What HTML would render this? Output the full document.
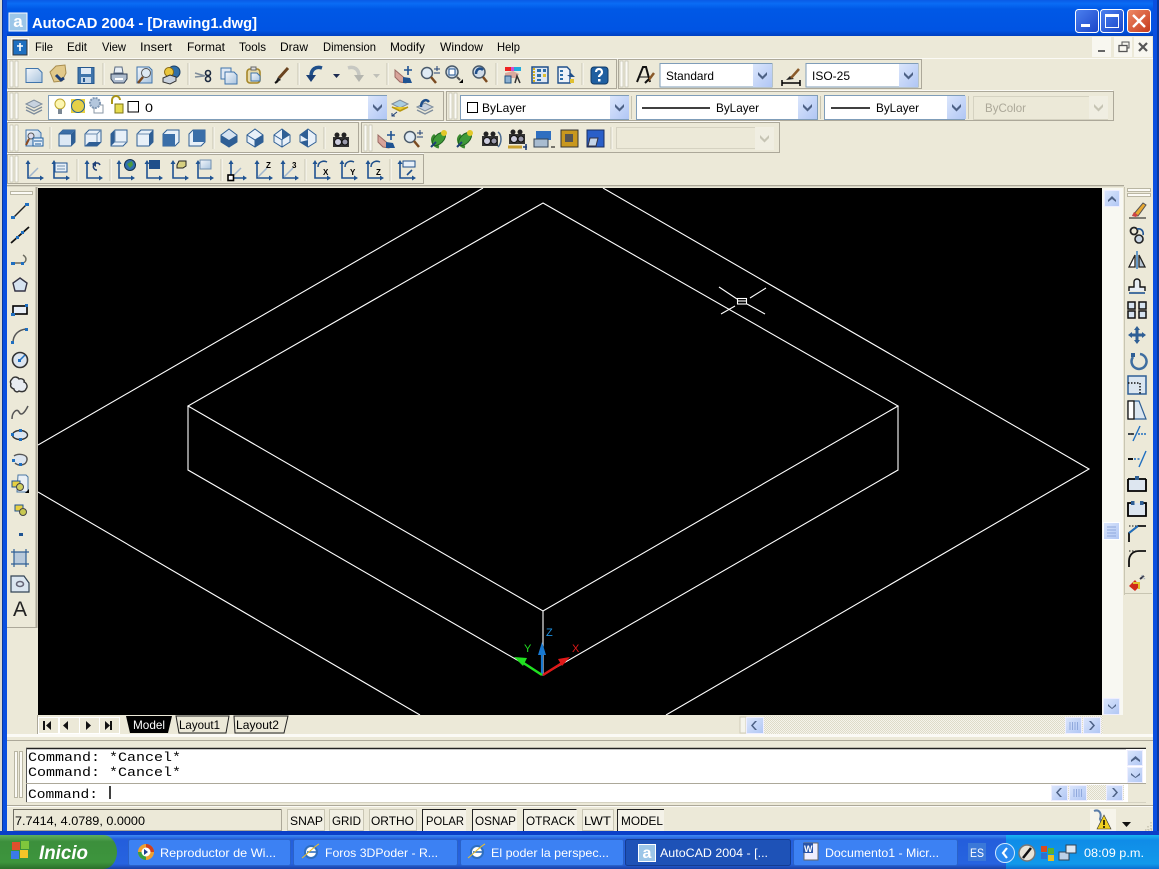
<!DOCTYPE html>
<html><head><meta charset="utf-8"><title>AutoCAD 2004</title>
<style>html,body{margin:0;padding:0;background:#ece9d8;overflow:hidden}svg{display:block}text{font-family:"Liberation Sans",sans-serif;font-size:12px;fill:#000}.m{font-family:"Liberation Mono",monospace;font-size:13px}.w{fill:#fff}</style></head><body>
<svg xmlns="http://www.w3.org/2000/svg" width="1159" height="869" viewBox="0 0 1159 869">
<defs>
<linearGradient id="tb" x1="0" y1="0" x2="0" y2="1"><stop offset="0" stop-color="#0a5ae6"/><stop offset=".1" stop-color="#0a6cf5"/><stop offset=".25" stop-color="#0058e6"/><stop offset=".85" stop-color="#0054e3"/><stop offset="1" stop-color="#0040c0"/></linearGradient>
<linearGradient id="task" x1="0" y1="0" x2="0" y2="1"><stop offset="0" stop-color="#3f8cf3"/><stop offset=".12" stop-color="#245edb"/><stop offset=".85" stop-color="#2663e0"/><stop offset="1" stop-color="#1941a5"/></linearGradient>
<linearGradient id="tray" x1="0" y1="0" x2="0" y2="1"><stop offset="0" stop-color="#18b5f2"/><stop offset=".15" stop-color="#0f8ce8"/><stop offset=".85" stop-color="#1199ea"/><stop offset="1" stop-color="#0b6fd0"/></linearGradient>
<linearGradient id="st" x1="0" y1="0" x2="0" y2="1"><stop offset="0" stop-color="#5fae5f"/><stop offset=".2" stop-color="#3c8f3c"/><stop offset=".8" stop-color="#3d953d"/><stop offset="1" stop-color="#2a6f2a"/></linearGradient>
<linearGradient id="cb" x1="0" y1="0" x2="1" y2="1"><stop offset="0" stop-color="#dbe6fc"/><stop offset="1" stop-color="#b0c6f4"/></linearGradient>
<linearGradient id="pg" x1="0" y1="0" x2="1" y2="1"><stop offset="0" stop-color="#f4f7fb"/><stop offset="1" stop-color="#a9c4de"/></linearGradient>
<linearGradient id="xbtn" x1="0" y1="0" x2="1" y2="1"><stop offset="0" stop-color="#4c80ef"/><stop offset="1" stop-color="#1a45c8"/></linearGradient>
<linearGradient id="xcl" x1="0" y1="0" x2="1" y2="1"><stop offset="0" stop-color="#ee8a66"/><stop offset="1" stop-color="#c5391c"/></linearGradient>
<pattern id="dith" width="2" height="2" patternUnits="userSpaceOnUse"><rect width="2" height="2" fill="#f5f4ec"/><rect width="1" height="1" fill="#dedbc8"/><rect x="1" y="1" width="1" height="1" fill="#dedbc8"/></pattern>

<g id="page"><path d="M-8-6.5H4l4 4V7.5H-8z" fill="url(#pg)" stroke="#3f74ab"/></g>
<g id="open"><path d="M-9-2l6-6 9-1 1 8-4 8-8 1z" fill="#e2c98a" stroke="#a88c4e"/><path d="M-3 1l5 5 3-2" stroke="#1f3f75" stroke-width="3" fill="none"/></g>
<g id="save"><rect x="-8" y="-7.5" width="16" height="16" fill="#3f74ab" stroke="#26578e"/><rect x="-5" y="-7" width="10" height="6" fill="#dfe9f4"/><rect x="-5" y="2" width="10" height="6" fill="#c3d6ea"/><rect x="-3" y="3" width="2" height="4" fill="#26578e"/></g>
<g id="print"><path d="M-4-8h7l1 6h-9z" fill="#e8eef5" stroke="#5a6a80"/><path d="M-8-1h16v5l-3 4h-10l-3-4z" fill="#aebccd" stroke="#2d3d55"/><rect x="-4" y="3" width="8" height="2" fill="#fff"/></g>
<g id="prev"><path d="M-8-8H4l3 3V8H-8z" fill="url(#pg)" stroke="#3f74ab"/><circle cx="1" cy="-2" r="4.5" fill="#dde9f3" stroke="#555"/><path d="M-2 2l-5 6" stroke="#7a4a20" stroke-width="2.5"/></g>
<g id="publish"><circle cx="3" cy="-3" r="6" fill="#2f6ea8" stroke="#1b3f66"/><circle cx="-2" cy="-3" r="4.5" fill="#e9c63c" stroke="#8a6a10"/><path d="M-8 3l7-3 6 2v4l-6 3-7-2z" fill="#c9d2de" stroke="#333"/></g>
<g id="cut"><path d="M-9-3l10 3M-9 1l9-1" stroke="#7f8c99" stroke-width="1.6"/><circle cx="4" cy="-3" r="2.5" fill="none" stroke="#1c2a40" stroke-width="1.6"/><circle cx="4" cy="3" r="2.5" fill="none" stroke="#1c2a40" stroke-width="1.6"/></g>
<g id="copy"><path d="M-8-8H2V3H-8z" fill="#dfe8f3" stroke="#3f74ab"/><path d="M-4-4H5l3 3V8H-4z" fill="url(#pg)" stroke="#3f74ab"/></g>
<g id="paste"><rect x="-7" y="-6" width="13" height="14" rx="3" fill="#e6d9a8" stroke="#a58628" stroke-width="1.6"/><path d="M-3-8H2v3h-5z" fill="#ddd" stroke="#666"/><path d="M-3-2H3l3 3V6H-3z" fill="url(#pg)" stroke="#3f74ab"/></g>
<g id="brush"><path d="M-7 8l3-6 3 3z" fill="#222"/><path d="M-3 3L6-7" stroke="#6a4420" stroke-width="3"/><path d="M-7 8l3-2" stroke="#111" stroke-width="2"/></g>
<g id="undo"><path d="M6-7C0-9-5-6-5 1" fill="none" stroke="#1f4f8a" stroke-width="3.5"/><path d="M-10 0H0L-5 7z" fill="#1a3f75"/></g>
<g id="redo"><path d="M-6-7C0-9 5-6 5 1" fill="none" stroke="#c7c8c2" stroke-width="3.5"/><path d="M10 0H0L5 7z" fill="#b4b5ae"/></g>
<g id="pan"><path d="M-9-5L4 6l-2 2-6-1-5-5z" fill="#d8a49a" stroke="#9b6a64"/><path d="M-1 2l7 1 2 5H-1z" fill="#1f5392"/><path d="M4-9v9M0-5h8" stroke="#1f5392" stroke-width="1.6"/></g>
<g id="zoom"><circle cx="-2" cy="-2" r="5.5" fill="#e0ebf4" stroke="#4a5a6a" stroke-width="1.5"/><path d="M2 2l5 6" stroke="#7a4a20" stroke-width="2.5"/><path d="M5-6h6M8-9v5M5-2h6" stroke="#1f3f75"/></g>
<g id="zoomw"><circle cx="-2" cy="-2" r="6" fill="#cfdbe8" stroke="#4a5a6a" stroke-width="1.5"/><rect x="-5" y="-5" width="6" height="6" fill="#fff" stroke="#1f5392"/><path d="M3 3l3 3" stroke="#555" stroke-width="2"/><path d="M9 5v4H5z" fill="#000"/></g>
<g id="zoomp"><circle cx="-1" cy="-2" r="6" fill="#cfdbe8" stroke="#4a5a6a" stroke-width="1.5"/><path d="M3-4C0-7-4-5-4 0" fill="none" stroke="#1f4f8a" stroke-width="2.5"/><path d="M3 3l4 5" stroke="#7a4a20" stroke-width="2.5"/></g>
<g id="prop"><rect x="-8" y="-8" width="16" height="4" fill="#d14ad1"/><rect x="-8" y="-8" width="6" height="4" fill="#e22"/><rect x="1" y="-8" width="7" height="4" fill="#2ad"/><path d="M-8-2l8-2 6 3-3 4H-8z" fill="#dba99d"/><path d="M-8 1h6v7h-6z" fill="#8cb0d0" stroke="#24527f"/><path d="M2 8l2-7 3 7" fill="none" stroke="#333" stroke-width="1.5"/></g>
<g id="dc"><rect x="-8" y="-8" width="16" height="16" fill="#dfe8f3" stroke="#1f4f8a" stroke-width="1.5"/><path d="M-6-7v14" stroke="#d4b020" stroke-width="2" stroke-dasharray="2 1"/><rect x="-3" y="-6" width="4" height="3" fill="#2f6ea8"/><rect x="3" y="-6" width="3" height="3" fill="#2f6ea8"/><rect x="-3" y="-1" width="4" height="3" fill="#2f6ea8"/><rect x="3" y="-1" width="3" height="3" fill="#e0c030"/><rect x="-3" y="4" width="4" height="2" fill="#2f6ea8"/></g>
<g id="tp"><path d="M-8-8H1l3 3V8H-8z" fill="#eef3f8" stroke="#1f4f8a" stroke-width="1.4"/><path d="M-6-4h3M-6 0h3M-6 4h3" stroke="#2f6ea8" stroke-width="2"/><path d="M1 0h3v-3l5 5-5 0z" fill="#1f4f8a"/><rect x="4" y="4" width="4" height="4" fill="#e0c030"/></g>
<g id="help"><rect x="-8" y="-8" width="17" height="17" rx="3" fill="#1f5fa0" stroke="#123a66"/><path d="M-3-3c0-4 6-4 6 0 0 3-3 2.500-3 5" fill="none" stroke="#fff" stroke-width="2.200"/><rect x="-1" y="4" width="2.500" height="2.500" fill="#fff"/></g>
<g id="sep"><path d="M0-11V11" stroke="#c8c5b2"/><path d="M1-11V11" stroke="#fbfaf5"/></g>
<g id="grip"><rect x="0" y="0" width="3" height="26" fill="#fbfaf5" stroke="#b9b6a3" stroke-width=".6"/><rect x="5" y="0" width="3" height="26" fill="#fbfaf5" stroke="#b9b6a3" stroke-width=".6"/></g>
<g id="arrow"><rect x="0" y="0" width="19" height="23" fill="url(#cb)"/><path d="M5 8l4.500 4.500L14 8v3l-4.500 4.500L5 11z" fill="#4d6185"/></g>
<g id="arrowd"><rect x="0" y="0" width="19" height="23" fill="#f0eee2"/><path d="M5 8l4.500 4.500L14 8v3l-4.500 4.500L5 11z" fill="#c6c4b4"/></g>
<g id="layers"><path d="M-8-3L0-7 8-3 0 1z" fill="#c7d2df" stroke="#7d8c9c"/><path d="M-8 0l8 4 8-4M-8 3l8 4 8-4" fill="none" stroke="#7d8c9c" stroke-width="1.400"/></g>
<g id="bulb"><circle cy="-3" r="5" fill="#fdf6b0" stroke="#bda52b"/><rect x="-2" y="2" width="4" height="5" fill="#7b8794"/></g>
<g id="sun"><rect x="-7" y="-7" width="14" height="14" fill="#e8d040"/><circle r="6.500" fill="#e5d048" stroke="#1f5fa0"/></g>
<g id="frz"><rect x="-2" y="0" width="9" height="8" fill="#fff" stroke="#8a97a6"/><circle cx="-1" cy="-2" r="5" fill="#b4c7dd" stroke="#8098b4" stroke-width="2" stroke-dasharray="2 1"/></g>
<g id="lock"><path d="M-5-2V-6a4 4 0 0 1 8 0" fill="none" stroke="#a99418" stroke-width="2"/><rect x="-2" y="-2" width="8" height="9" fill="#e6dc50" stroke="#7e7414"/></g>
<g id="lchg"><path d="M-8-3L0-7 8-3 0 1z" fill="#a9cce0" stroke="#7d8c9c"/><path d="M-8 0l8 4 8-4" fill="#e8c830" stroke="#b89810" stroke-width="1.600"/><path d="M-8 9l5-4M-8 6v3h3" stroke="#1f3f75" fill="none"/></g>
<g id="lprev"><path d="M-8 0L0-4 8 0 0 4z" fill="#c7d2df" stroke="#7d8c9c"/><path d="M-8 3l8 4 8-4" fill="none" stroke="#7d8c9c" stroke-width="1.400"/><path d="M4-5C1-9-4-6-4 0" fill="none" stroke="#1f4f8a" stroke-width="2.500"/></g>
<g id="tst"><path d="M-9 7L-3-8 0-8 4 7" fill="none" stroke="#111" stroke-width="2"/><path d="M-6 2H2" stroke="#111"/><path d="M2 6l6-8" stroke="#8a5a2a" stroke-width="2.500"/><path d="M-1 8L3 4" stroke="#111" stroke-width="2"/></g>
<g id="dim"><path d="M-9 7h18M-9 4v6M9 4v6" stroke="#000" stroke-width="1.500"/><path d="M-5 4L-1 0 3 3z" fill="#222"/><path d="M0 2L8-7" stroke="#8a5a2a" stroke-width="2.500"/></g>
<g id="named"><path d="M-8-8H4l3 3V8H-8z" fill="url(#pg)" stroke="#3f74ab"/><circle cx="-3" cy="-2" r="3" fill="#dde" stroke="#555"/><path d="M-5 1l-3 6" stroke="#8a4a20" stroke-width="2"/><rect x="-1" y="0" width="10" height="8" fill="#e8f0f8" stroke="#1f5fa0"/><path d="M0 3h8M1 6h6" stroke="#1f5fa0"/></g>
<g id="v1"><path d="M-8-4L-4-8H8V4L4 8H-8z" fill="#dce8f4" stroke="#2f5f95"/><path d="M-8-4L-4-8H8L4-4z" fill="#3a6ea8"/><path d="M4-4V8L8 4V-8z" fill="#2f5f95"/><path d="M-8-4H4" stroke="#2f5f95"/></g>
<g id="v2"><path d="M-8-4L-4-8H8V4L4 8H-8z" fill="#e8f0f8" stroke="#2f5f95"/><path d="M-8-4H4V8M4-4L8-8" fill="none" stroke="#6b8db0"/><path d="M-8 8L-4 4H8L4 8z" fill="#2f5f95"/></g>
<g id="v3"><path d="M-8-4L-4-8H8V4L4 8H-8z" fill="#e8f0f8" stroke="#2f5f95"/><path d="M-8-4L-4-8V4L-8 8z" fill="#2f5f95"/><path d="M-4-8V4H8" fill="none" stroke="#6b8db0"/></g>
<g id="v4"><path d="M-8-4L-4-8H8V4L4 8H-8z" fill="#e8f0f8" stroke="#2f5f95"/><path d="M4-4V8L8 4V-8z" fill="#2f5f95"/><path d="M-8-4H4" stroke="#6b8db0"/></g>
<g id="v5"><path d="M-8-4L-4-8H8V4L4 8H-8z" fill="#e8f0f8" stroke="#2f5f95"/><rect x="-8" y="-4" width="12" height="12" fill="#3a6ea8"/></g>
<g id="v6"><path d="M-8-4L-4-8H8V4L4 8H-8z" fill="#e8f0f8" stroke="#2f5f95"/><rect x="-4" y="-8" width="12" height="12" fill="#3a6ea8"/></g>
<g id="iso1"><path d="M0-9L8-3V4L0 9-8 4V-3z" fill="#d6e3f0" stroke="#2f5f95"/><path d="M-8-3L0 2V9L-8 4z" fill="#2f5f95"/><path d="M0 2V9L8 4V-3z" fill="#2f5f95"/></g>
<g id="iso2"><path d="M0-9L8-3V4L0 9-8 4V-3z" fill="#e8f0f8" stroke="#2f5f95"/><path d="M-8-3L0 2 8-3M0 2V9" fill="none" stroke="#2f5f95"/><path d="M0 2V9L8 4V-3z" fill="#2f5f95"/></g>
<g id="iso3"><path d="M0-9L8-3V4L0 9-8 4V-3z" fill="#e8f0f8" stroke="#2f5f95"/><path d="M0-9V2L8-3z" fill="#2f5f95"/><path d="M-8-3L0 2V9" fill="none" stroke="#2f5f95"/></g>
<g id="iso4"><path d="M0-9L8-3V4L0 9-8 4V-3z" fill="#e8f0f8" stroke="#2f5f95"/><path d="M0-9V2L-8-3z M-8 4L0 2V9z" fill="#2f5f95"/></g>
<g id="cam"><rect x="-8" y="-3" width="16" height="10" fill="#333"/><circle cx="-4" cy="-5" r="2.500" fill="#222"/><circle cx="3" cy="-5" r="2.500" fill="#222"/><circle cx="-3" cy="2" r="3.500" fill="#ccd" stroke="#111"/><circle cx="4" cy="2" r="3" fill="#99a" stroke="#111"/></g>
<g id="orbit"><path d="M-4-4C-9 0-6 7 0 8" fill="none" stroke="#3a8a30" stroke-width="3"/><ellipse rx="8" ry="4.500" transform="rotate(-45)" fill="#3f9a38" stroke="#1f5f1f"/><circle cx="5" cy="-6" r="3" fill="#e2c82a"/><path d="M-8 8L-3 3" stroke="#1f3f75" stroke-width="2"/></g>
<g id="ucs"><path d="M-6-9V7H8" fill="none" stroke="#1f5392" stroke-width="1.600"/><path d="M-6-11l-2.500 4h5zM10 7L6 4.500v5z" fill="#1f5392"/><path d="M-5 6L4-3" stroke="#9fb5cc" stroke-width="1.500"/></g>
<g id="ucsb"><path d="M-6-9V7H8" fill="none" stroke="#1f5392" stroke-width="1.600"/><path d="M-6-11l-2.500 4h5zM10 7L6 4.500v5z" fill="#1f5392"/></g>
<g id="line"><path d="M-7 7L7-7" stroke="#222" stroke-width="1.400"/><rect x="-9" y="5" width="4" height="3" fill="#1f6fc0"/><rect x="5" y="-8" width="4" height="3" fill="#1f6fc0"/></g>
<g id="xline"><path d="M-9 8L9-8" stroke="#111" stroke-width="1.800"/><rect x="-4" y="1" width="3" height="3" fill="#1f6fc0"/><rect x="1" y="-4" width="3" height="3" fill="#1f6fc0"/></g>
<g id="pline"><path d="M-7 3H2C6 3 8-2 3-5" fill="none" stroke="#6b6b60" stroke-width="1.500"/><rect x="-9" y="2" width="4" height="3" fill="#1f6fc0"/><rect x="1" y="2" width="3" height="3" fill="#1f6fc0"/></g>
<g id="poly"><path d="M0-7L7-2 5 6H-5L-7-2z" fill="#d6e3f0" stroke="#334" stroke-width="1.400"/></g>
<g id="rect"><rect x="-7" y="-4" width="14" height="8" fill="#e8eef5" stroke="#000" stroke-width="1.600"/><rect x="5" y="-6" width="3" height="3" fill="#1f6fc0"/><rect x="-9" y="3" width="4" height="3" fill="#1f6fc0"/></g>
<g id="arc"><path d="M-7 7C-7-1-2-6 6-7" fill="none" stroke="#555" stroke-width="1.500"/><rect x="-9" y="5" width="3" height="3" fill="#1f6fc0"/><rect x="5" y="-8" width="3" height="3" fill="#1f6fc0"/></g>
<g id="circ"><circle r="7.500" fill="#dde6f0" stroke="#333" stroke-width="1.600"/><path d="M0 0L5-5" stroke="#1f6fc0" stroke-width="1.500"/><rect x="-2" y="-1" width="3" height="3" fill="#1f6fc0"/></g>
<g id="cloud"><path d="M-8-6c2-3 6-2 7 0 3-1 6 1 5 3 3 1 4 5 2 7-1 3-5 3-7 2-2 2-5 0-5-2-3-1-4-3-3-5-1-2-1-3 1-5z" fill="#e9edf2" stroke="#333" stroke-width="1.400"/></g>
<g id="spline"><path d="M-8 7C-8 0-3-4-1 0S4 2 8-6" fill="none" stroke="#555" stroke-width="1.500"/></g>
<g id="ell"><ellipse rx="7.500" ry="4.500" fill="#dde6f0" stroke="#333" stroke-width="1.400"/><rect x="-9" y="-2" width="3" height="3" fill="#1f6fc0"/><rect x="-1" y="-6" width="3" height="3" fill="#1f6fc0"/><rect x="-1" y="3" width="3" height="3" fill="#1f6fc0"/></g>
<g id="ella"><path d="M-6-4C-2-7 8-6 7 0S-2 6-5 3" fill="#dde6f0" stroke="#555" stroke-width="1.400"/><rect x="-8" y="-1" width="3" height="3" fill="#1f6fc0"/><rect x="-1" y="3" width="3" height="3" fill="#1f6fc0"/></g>
<g id="block"><path d="M-2-9H6l2 2V8H-3z" fill="#eaf0f6" stroke="#4a77a5"/><rect x="-8" y="-3" width="8" height="6" fill="#e8d040" stroke="#1f5392"/><circle cx="0" cy="3" r="3.500" fill="#d0d060" stroke="#444"/><path d="M9 5v4H5z" fill="#000"/></g>
<g id="block2"><rect x="-6" y="-5" width="8" height="6" fill="#e8d040" stroke="#1f5392"/><circle cx="2" cy="2" r="3.500" fill="#c8c850" stroke="#444"/></g>
<g id="hatch"><rect x="-6" y="-6" width="12" height="12" fill="#b9cadb"/><path d="M-9-6H9M-9 6H9M-6-9V9M6-9V9" stroke="#2f5f95" stroke-width="1.200"/></g>
<g id="region"><path d="M-9-8H4L9-1V8H-9z" fill="#dbe6f0" stroke="#345" stroke-width="1.200"/><ellipse cy="0" rx="3.500" ry="2.500" fill="none" stroke="#667" stroke-width="1.600"/></g>
<g id="erase"><path d="M-8 8H9" stroke="#111"/><path d="M-4 5L6-7l3 2-8 11z" fill="#e8a830" stroke="#555"/><path d="M-5 6L-3 2l4 3-2 2z" fill="#c44"/></g>
<g id="ccopy"><circle cx="-3" cy="-4" r="3.500" fill="none" stroke="#222" stroke-width="1.800"/><circle cx="2" cy="4" r="4" fill="#c9d6e4" stroke="#222" stroke-width="1.600"/><path d="M0-6C4-7 7-4 6 0" fill="none" stroke="#1f5392" stroke-width="1.600"/></g>
<g id="mirror"><path d="M0-9V9" stroke="#1f6fc0" stroke-width="1.300"/><path d="M-2-5V7H-8z" fill="#fff" stroke="#222" stroke-width="1.300"/><path d="M2-5V7H8z" fill="#b8c5d3" stroke="#222" stroke-width="1.300"/></g>
<g id="offset"><path d="M-8 6V2H-3V-3C-3-7 3-7 3-3V2H8V6" fill="#e8eef5" stroke="#111" stroke-width="1.400"/><path d="M-8 8H8" stroke="#1f5392" stroke-width="1.600"/></g>
<g id="array"><rect x="-9" y="-8" width="7" height="7" fill="#d6e3f0" stroke="#111" stroke-width="1.500"/><rect x="2" y="-8" width="7" height="7" fill="#d6e3f0" stroke="#111" stroke-width="1.500"/><rect x="-9" y="1" width="7" height="7" fill="#d6e3f0" stroke="#111" stroke-width="1.500"/><rect x="2" y="1" width="7" height="7" fill="#d6e3f0" stroke="#111" stroke-width="1.500"/></g>
<g id="move"><path d="M0-9L3-5H1.500V-1.500H5V-3L9 0 5 3V1.500H1.500V5H3L0 9-3 5H-1.500V1.500H-5V3L-9 0-5-3V-1.500H-1.500V-5H-3z" fill="#2f5f95"/></g>
<g id="rot"><path d="M-5-4A7.500 7.500 0 1 0 2-7" fill="none" stroke="#3f6ea0" stroke-width="2.500"/><rect x="-7" y="-8" width="4" height="4" fill="#2f5f95"/></g>
<g id="scale"><rect x="-9" y="-9" width="18" height="18" fill="#dbe6f0" stroke="#2f5f95" stroke-width="1.500"/><path d="M-9-2H3V9" fill="none" stroke="#111" stroke-dasharray="1.500 1.500" stroke-width="1.500"/></g>
<g id="stretch"><path d="M-9-9H2L9 9H-9z" fill="#dbe6f0" stroke="#2f5f95" stroke-width="1.200"/><path d="M-9-9H-3V9H-9z" fill="#fff" stroke="#111" stroke-width="1.300"/></g>
<g id="trim"><path d="M-9 0H-3M1 0H9" stroke="#1f6fc0" stroke-dasharray="2 1" stroke-width="1.500"/><path d="M-9 0H-3" stroke="#222" stroke-width="1.500"/><path d="M-4 7L3-8" stroke="#1f6fc0" stroke-width="1.400"/></g>
<g id="ext"><path d="M-9 0H-4" stroke="#111" stroke-width="2"/><path d="M-3 0H3" stroke="#1f6fc0" stroke-width="1.600" stroke-dasharray="2 1.500"/><path d="M2 8L9-8" stroke="#1f6fc0" stroke-width="1.400"/></g>
<g id="brk"><path d="M-9-5V7H9V-5" fill="#dde6f0" stroke="#000" stroke-width="1.800"/><path d="M-9-5H9" stroke="#000" stroke-width="1.800"/><rect x="-2" y="-8" width="4" height="4" fill="#2f5f95"/></g>
<g id="brk2"><path d="M-3-6H-9V7H9V-6H3" fill="#dde6f0" stroke="#000" stroke-width="1.800"/><rect x="-6" y="-8" width="3.500" height="4" fill="#2f5f95"/><rect x="3" y="-8" width="3.500" height="4" fill="#2f5f95"/></g>
<g id="chamf"><path d="M-8 9V0L1-7H9" fill="none" stroke="#111" stroke-width="1.800"/><path d="M-8-7H1" stroke="#111" stroke-dasharray="1.500 1.500"/><path d="M-8 0L1-7" stroke="#1f6fc0" stroke-width="1.800"/></g>
<g id="fillet"><path d="M-8 9V3C-8-3-4-7 2-7H9" fill="none" stroke="#111" stroke-width="1.800"/><path d="M-8-7H1" stroke="#111" stroke-dasharray="1.500 1.500"/></g>
<g id="expl"><path d="M-8 2L-2-4 3 2-2 7z" fill="#d02818"/><path d="M-4-1H2V5" stroke="#e0c030" stroke-width="2" fill="none"/><path d="M3-5L7-8" stroke="#334" stroke-width="2"/><path d="M5-9l2 4M8-5L4-9" stroke="#9ab" stroke-dasharray="1 1"/></g>
<g id="ie"><circle r="6" fill="#fff" stroke="#2f6fc0" stroke-width="2"/><path d="M-4 0H5" stroke="#2f6fc0" stroke-width="1.600"/><path d="M-9 6C-4 2 4-6 8-8" stroke="#e8c030" fill="none"/></g>
</defs>

<!-- window frame -->
<rect width="1159" height="869" fill="#ece9d8"/>
<rect width="1159" height="36" fill="url(#tb)"/>
<rect x="0" y="0" width="2" height="835" fill="#d8d8d0"/>
<rect x="2" y="0" width="5" height="835" fill="#0a4fe0"/>
<rect x="2" y="0" width="1" height="835" fill="#0838a0"/>
<rect x="1153" y="0" width="6" height="835" fill="#0a4fe0"/>
<rect x="1157" y="0" width="2" height="835" fill="#0838a0"/>
<rect x="0" y="831" width="1159" height="4" fill="#0a3fc8"/>

<!-- title -->
<rect x="9" y="13" width="18" height="18" fill="#9cc6e8" stroke="#fff"/><text x="18" y="27" text-anchor="middle" class="w" style="font-size:17px;font-weight:bold">a</text>
<text x="32" y="28" class="w" style="font-size:15px;font-weight:bold" textLength="225" lengthAdjust="spacingAndGlyphs">AutoCAD 2004 - [Drawing1.dwg]</text>
<rect x="1075.500" y="9.500" width="23" height="23" rx="3" fill="url(#xbtn)" stroke="#fff"/><rect x="1081" y="24" width="9" height="3" fill="#fff"/>
<rect x="1100.500" y="9.500" width="23" height="23" rx="3" fill="url(#xbtn)" stroke="#fff"/><rect x="1105.500" y="14.500" width="13" height="13" fill="none" stroke="#fff"/><rect x="1105" y="14" width="14" height="3" fill="#fff"/>
<rect x="1127.500" y="9.500" width="23" height="23" rx="3" fill="url(#xcl)" stroke="#fff"/><path d="M1133 15l12 12M1145 15l-12 12" stroke="#fff" stroke-width="2.400"/>

<!-- menu -->
<rect x="11" y="38" width="18" height="18" fill="#fbfaf5"/><rect x="13" y="40" width="14" height="15" fill="#1f6fc0" stroke="#333"/><path d="M20 43v8M17 46h6" stroke="#fff" stroke-width="1.600"/>
<text x="35" y="51" textLength="18" lengthAdjust="spacingAndGlyphs">File</text>
<text x="67" y="51" textLength="20" lengthAdjust="spacingAndGlyphs">Edit</text>
<text x="102" y="51" textLength="24" lengthAdjust="spacingAndGlyphs">View</text>
<text x="140" y="51" textLength="32" lengthAdjust="spacingAndGlyphs">Insert</text>
<text x="187" y="51" textLength="38" lengthAdjust="spacingAndGlyphs">Format</text>
<text x="239" y="51" textLength="27" lengthAdjust="spacingAndGlyphs">Tools</text>
<text x="280" y="51" textLength="28" lengthAdjust="spacingAndGlyphs">Draw</text>
<text x="323" y="51" textLength="53" lengthAdjust="spacingAndGlyphs">Dimension</text>
<text x="390" y="51" textLength="35" lengthAdjust="spacingAndGlyphs">Modify</text>
<text x="440" y="51" textLength="43" lengthAdjust="spacingAndGlyphs">Window</text>
<text x="497" y="51" textLength="23" lengthAdjust="spacingAndGlyphs">Help</text>
<g fill="#f8f7f0"><rect x="1092" y="37" width="19" height="20"/><rect x="1114" y="37" width="18" height="20"/><rect x="1134" y="37" width="18" height="20"/></g>
<path d="M1098 51h7" stroke="#666" stroke-width="2"/>
<rect x="1119" y="45.500" width="8" height="6" fill="none" stroke="#555" stroke-width="1.300"/><path d="M1122 45v-3h7v6h-2" fill="none" stroke="#555"/>
<path d="M1139 43l8 8M1147 43l-8 8" stroke="#555" stroke-width="2.200"/>

<!-- toolbar backgrounds -->
<g fill="#ece9d8" stroke="#aca899">
<rect x="7.500" y="59.500" width="609" height="29"/><rect x="618.500" y="59.500" width="303" height="29"/>
<rect x="7.500" y="91.500" width="436" height="29"/><rect x="446.500" y="91.500" width="667" height="29"/>
<rect x="7.500" y="122.500" width="351" height="30"/><rect x="361.500" y="122.500" width="418" height="30"/>
<rect x="7.500" y="154.500" width="416" height="29"/>
</g>
<path d="M7 58.500H1153M7 90.500H1113M7 121.500H780M7 153.500H424" stroke="#fbfaf5"/>
<use href="#grip" x="10" y="61"/><use href="#grip" x="620" y="61"/><use href="#grip" x="10" y="93"/><use href="#grip" x="449" y="93"/><use href="#grip" x="10" y="125"/><use href="#grip" x="364" y="125"/><use href="#grip" x="10" y="156"/>

<!-- row 1 -->
<use href="#page" x="34" y="75"/><use href="#open" x="59" y="74"/><use href="#save" x="86" y="75"/><use href="#sep" x="103" y="74"/>
<use href="#print" x="119" y="75"/><use href="#prev" x="145" y="75"/><use href="#publish" x="171" y="75"/><use href="#sep" x="188" y="74"/>
<use href="#cut" x="204" y="76"/><use href="#copy" x="229" y="76"/><use href="#paste" x="254" y="75"/><use href="#brush" x="282" y="75"/><use href="#sep" x="298" y="74"/>
<use href="#undo" x="316" y="75"/><path d="M333 74h7l-3.500 4z" fill="#1c2a50"/><use href="#redo" x="354" y="75"/><path d="M373 74h7l-3.500 4z" fill="#c0c0b8"/><use href="#sep" x="387" y="74"/>
<use href="#pan" x="404" y="75"/><use href="#zoom" x="429" y="75"/><use href="#zoomw" x="454" y="74"/><use href="#zoomp" x="480" y="74"/><use href="#sep" x="496" y="74"/>
<use href="#prop" x="513" y="75"/><use href="#dc" x="540" y="75"/><use href="#tp" x="566" y="75"/><use href="#sep" x="582" y="74"/><use href="#help" x="599" y="75"/>
<use href="#tst" x="646" y="75"/>
<rect x="660" y="63.500" width="112" height="23.500" fill="#fff" stroke="#7f9db9"/><text x="666" y="80" textLength="48" lengthAdjust="spacingAndGlyphs">Standard</text><use href="#arrow" x="753" y="64"/>
<use href="#dim" x="791" y="76"/>
<rect x="806" y="63.500" width="112" height="23.500" fill="#fff" stroke="#7f9db9"/><text x="812" y="80" textLength="38" lengthAdjust="spacingAndGlyphs">ISO-25</text><use href="#arrow" x="899" y="64"/>

<!-- row 2 -->
<use href="#layers" x="34" y="107"/>
<rect x="48.500" y="95.500" width="338" height="24" fill="#fff" stroke="#7f9db9"/>
<use href="#bulb" x="60" y="107"/><use href="#sun" x="78" y="106"/><use href="#frz" x="96" y="105"/><use href="#lock" x="117" y="106"/>
<rect x="128" y="101.500" width="10.500" height="10.500" fill="#fff" stroke="#000"/><text x="145" y="112" textLength="8" lengthAdjust="spacingAndGlyphs">0</text>
<use href="#arrow" x="368" y="96"/><use href="#lchg" x="400" y="107"/><use href="#lprev" x="425" y="107"/>
<rect x="460.500" y="95.500" width="168" height="24" fill="#fff" stroke="#7f9db9"/><rect x="467.500" y="102.500" width="10" height="10" fill="#fff" stroke="#000"/><text x="482" y="112" textLength="44" lengthAdjust="spacingAndGlyphs">ByLayer</text><use href="#arrow" x="610" y="96"/>
<rect x="636.500" y="95.500" width="181" height="24" fill="#fff" stroke="#7f9db9"/><path d="M642 108h68" stroke="#000" stroke-width="1.600"/><text x="716" y="112" textLength="43" lengthAdjust="spacingAndGlyphs">ByLayer</text><use href="#arrow" x="798" y="96"/>
<rect x="824.500" y="95.500" width="140" height="24" fill="#fff" stroke="#7f9db9"/><path d="M831 108h39" stroke="#000" stroke-width="1.600"/><text x="876" y="112" textLength="43" lengthAdjust="spacingAndGlyphs">ByLayer</text><use href="#arrow" x="947" y="96"/>
<rect x="973.500" y="96.500" width="134" height="23" fill="#ece9d8" stroke="#d5d2c1"/><text x="985" y="112" textLength="41" lengthAdjust="spacingAndGlyphs" style="fill:#aca899">ByColor</text><use href="#arrowd" x="1089" y="96"/>
<path d="M631.500 96v23M820.500 96v23M968.500 96v23" stroke="#c8c5b2"/>

<!-- row 3 -->
<use href="#named" x="34" y="138"/><use href="#sep" x="50" y="138"/>
<use href="#v1" x="67" y="138"/><use href="#v2" x="93" y="138"/><use href="#v3" x="119" y="138"/><use href="#v4" x="145" y="138"/><use href="#v5" x="171" y="138"/><use href="#v6" x="197" y="138"/><use href="#sep" x="213" y="138"/>
<use href="#iso1" x="229" y="138"/><use href="#iso2" x="255" y="138"/><use href="#iso3" x="282" y="138"/><use href="#iso4" x="308" y="138"/><use href="#sep" x="324" y="138"/>
<use href="#cam" x="341" y="140"/>
<use href="#pan" x="387" y="140"/><use href="#zoom" x="412" y="139"/><use href="#orbit" x="439" y="139"/><use href="#orbit" x="465" y="139"/>
<use href="#cam" x="490" y="139"/><path d="M498 132c4 3 4 11 0 15" fill="none" stroke="#4a6a90" stroke-width="1.500"/>
<use href="#cam" x="517" y="137"/><path d="M508 147h14" stroke="#c8a030" stroke-width="3"/><path d="M523 147h4M526 144v6" stroke="#1f3f75" stroke-width="1.600"/>
<rect x="536" y="131" width="15" height="9" fill="#2f6fc0"/><rect x="534" y="139" width="14" height="8" fill="#a8bcd0" stroke="#345"/><path d="M551 147h4" stroke="#000"/>
<rect x="561" y="130" width="17" height="17" fill="#c9981e" stroke="#333"/><path d="M565 134h8v8h-8z" fill="#555"/>
<rect x="587" y="130" width="17" height="17" fill="#2a5fc8" stroke="#1a2f60"/><path d="M590 138h8l-2 8h-8z" fill="#c3d4e8" stroke="#334"/>
<use href="#sep" x="611" y="138"/>
<rect x="616.500" y="127.500" width="157" height="21" fill="#ece9d8" stroke="#d5d2c1"/><use href="#arrowd" x="755" y="127"/>

<!-- row 4 -->
<use href="#ucs" x="34" y="171"/><use href="#ucsb" x="60" y="171"/><rect x="55" y="163" width="12" height="9" fill="#e8f0f8" stroke="#1f5392"/><path d="M57 166h8M57 169h8" stroke="#6f8fb0"/><use href="#sep" x="77" y="170"/>
<use href="#ucsb" x="93" y="171"/><path d="M100 165a3.500 3.500 0 1 0-3 5" fill="none" stroke="#1f3f75" stroke-width="1.600"/><path d="M96 161l-4 3 4 3z" fill="#1f3f75"/><use href="#sep" x="110" y="170"/>
<use href="#ucsb" x="125" y="171"/><circle cx="130" cy="165" r="5.500" fill="#2f6fb0" stroke="#14304f"/><path d="M127 164l5-3 1 4-3 3z" fill="#4a9a40"/>
<use href="#ucsb" x="153" y="171"/><rect x="149" y="160" width="11" height="9" fill="#1f4f8a"/>
<use href="#ucsb" x="179" y="171"/><path d="M177 165l2-4h7v5l-3 2h-6z" fill="#d6cf80" stroke="#222"/>
<use href="#ucsb" x="204" y="171"/><rect x="200" y="160" width="11" height="9" fill="url(#pg)" stroke="#6f8fb0"/><use href="#sep" x="221" y="170"/>
<use href="#ucs" x="237" y="171"/><rect x="228" y="175" width="5.500" height="5.500" fill="#fff" stroke="#000" stroke-width="1.600"/>
<use href="#ucs" x="263" y="171"/><text x="266" y="168" style="font-size:8px;font-weight:bold">Z</text>
<use href="#ucs" x="289" y="171"/><text x="292" y="168" style="font-size:8px;font-weight:bold">3</text><use href="#sep" x="305" y="170"/>
<use href="#ucsb" x="321" y="171"/><path d="M318 167c0-5 5-7 9-5" fill="none" stroke="#1f4f8a" stroke-width="1.500"/><text x="323" y="175" style="font-size:8px;font-weight:bold">X</text>
<use href="#ucsb" x="348" y="171"/><path d="M345 167c0-5 5-7 9-5" fill="none" stroke="#1f4f8a" stroke-width="1.500"/><text x="350" y="175" style="font-size:8px;font-weight:bold">Y</text>
<use href="#ucsb" x="374" y="171"/><path d="M371 167c0-5 5-7 9-5" fill="none" stroke="#1f4f8a" stroke-width="1.500"/><text x="376" y="175" style="font-size:8px;font-weight:bold">Z</text><use href="#sep" x="390" y="170"/>
<use href="#ucsb" x="406" y="171"/><rect x="403" y="161" width="12" height="6" fill="#e8f0f8" stroke="#1f4f8a"/><path d="M407 175l5-5" stroke="#1f4f8a" stroke-width="1.600"/>

<!-- canvas -->
<path d="M7 185.500H1124" stroke="#aca899"/><path d="M7 186.500H1124" stroke="#d8d5c4"/>
<rect x="38" y="188" width="1064" height="527" fill="#000"/>
<clipPath id="cv"><rect x="38" y="188" width="1064" height="527"/></clipPath>
<g clip-path="url(#cv)" fill="none" stroke="#fff" stroke-width="1.100">
<path d="M543 203L898 406 543 611 188 406z"/>
<path d="M188 406V470L543 675 898 470V406M543 611V675"/>
<path d="M38 445L483 188M603 188L1089 469 666 715M38 492L420 715"/>
<path d="M719 287L737 299M747 304L765 314M721 314L735 306M750 298L766 288"/>
<rect x="737.500" y="298.500" width="9" height="5.500"/><path d="M738 301H746"/>
</g>
<!-- UCS -->
<path d="M542 675V652" stroke="#1878d0" stroke-width="2.200"/><path d="M542 642l4 13h-8z" fill="#1878d0"/>
<path d="M542 675L522 662" stroke="#20e020" stroke-width="2.500"/><path d="M514 657l13 1-4 8z" fill="#20e020"/>
<path d="M543 675L562 663" stroke="#e01818" stroke-width="2.500"/><path d="M570 657l-12 2 4 7z" fill="#e01818"/>
<text x="546" y="636" style="font-size:11px;fill:#1e90e0">Z</text><text x="524" y="652" style="font-size:11px;fill:#20e020">Y</text><text x="572" y="652" style="font-size:11px;fill:#e01818">X</text>

<!-- left toolbar -->
<rect x="7" y="189" width="30" height="438" fill="#ece9d8"/><path d="M36.500 187V628" stroke="#aca899" stroke-width="2"/><path d="M7 627.500H37" stroke="#aca899"/>
<rect x="10.500" y="191.500" width="22" height="3" fill="#fbfaf5" stroke="#b9b6a3"/>
<use href="#line" x="20" y="211"/><use href="#xline" x="20" y="235"/><use href="#pline" x="20" y="260"/><use href="#poly" x="20" y="285"/><use href="#rect" x="20" y="310"/><use href="#arc" x="20" y="336"/><use href="#circ" x="20" y="360"/><use href="#cloud" x="20" y="385"/><use href="#spline" x="20" y="412"/><use href="#ell" x="20" y="435"/><use href="#ella" x="20" y="460"/><use href="#block" x="20" y="484"/><use href="#block2" x="21" y="510"/><rect x="19" y="533" width="4" height="3" fill="#1f5392"/><use href="#hatch" x="20" y="558"/><use href="#region" x="20" y="584"/>
<text x="20" y="616" text-anchor="middle" style="font-size:21px;fill:#222">A</text>

<!-- vertical scrollbar -->
<rect x="1102" y="188" width="21" height="527" fill="#f8f8f2"/>
<rect x="1104.500" y="190.500" width="15" height="16" rx="1" fill="url(#cb)" stroke="#eef"/><path d="M1108 200l4-4 4 4v2l-4-3-4 3z" fill="#4d6185"/>
<rect x="1103.500" y="522.500" width="16" height="17" fill="url(#cb)" stroke="#fff"/><path d="M1107 527h9M1107 530h9M1107 533h9M1107 536h9" stroke="#8fa8dc"/>
<rect x="1103.500" y="698.500" width="16" height="16" rx="1" fill="url(#cb)" stroke="#eef"/><path d="M1108 704l4 4 4-4v2l-4 3-4-3z" fill="#4d6185"/>

<!-- right toolbar -->
<rect x="1124" y="187" width="29" height="408" fill="#ece9d8"/><path d="M1124.500 187V595M1124 593.500H1152" stroke="#c8c5b2"/>
<rect x="1127.500" y="188.500" width="23" height="3" fill="#fbfaf5" stroke="#b9b6a3"/><rect x="1127.500" y="193.500" width="23" height="3" fill="#fbfaf5" stroke="#b9b6a3"/>
<use href="#erase" x="1137" y="210"/><use href="#ccopy" x="1137" y="235"/><use href="#mirror" x="1137" y="260"/><use href="#offset" x="1137" y="285"/><use href="#array" x="1137" y="310"/><use href="#move" x="1137" y="335"/><use href="#rot" x="1138" y="361"/><use href="#scale" x="1137" y="385"/><use href="#stretch" x="1137" y="410"/><use href="#trim" x="1137" y="434"/><use href="#ext" x="1137" y="459"/><use href="#brk" x="1137" y="484"/><use href="#brk2" x="1137" y="509"/><use href="#chamf" x="1137" y="533"/><use href="#fillet" x="1137" y="558"/><use href="#expl" x="1137" y="584"/>

<!-- tabs & hscroll -->
<rect x="38" y="715" width="1085" height="19" fill="#ece9d8"/>
<path d="M37.500 715V735" stroke="#aca899"/>
<g fill="#ece9d8" stroke="#fff"><rect x="38.500" y="717.500" width="20" height="16"/><rect x="59.500" y="717.500" width="20" height="16"/><rect x="79.500" y="717.500" width="20" height="16"/><rect x="99.500" y="717.500" width="20" height="16"/></g>
<g fill="#111"><rect x="43" y="721" width="2" height="9"/><path d="M51 721v9l-5-4.500zM68 721v9l-5-4.500zM86 721v9l5-4.500zM105 721v9l5-4.500z"/><rect x="110" y="721" width="2" height="9"/></g>
<path d="M126 716h46l-4 17h-38z" fill="#000"/><text x="133" y="729" class="w" textLength="32" lengthAdjust="spacingAndGlyphs">Model</text>
<path d="M176 716h53l-3 17h-47z" fill="#ece9d8" stroke="#222"/><text x="179" y="729" textLength="41" lengthAdjust="spacingAndGlyphs">Layout1</text>
<path d="M234 716h54l-4 17h-49z" fill="#ece9d8" stroke="#222"/><text x="236" y="729" textLength="43" lengthAdjust="spacingAndGlyphs">Layout2</text>
<rect x="740" y="717" width="6" height="16" fill="#f5f4ec" stroke="#cfccb9"/>
<rect x="764" y="716" width="339" height="18" fill="url(#dith)"/>
<rect x="746.500" y="717.500" width="17" height="16" fill="url(#cb)" stroke="#eef"/><path d="M757 721l-4 4.500 4 4.500h-2l-4-4.500 4-4.500z" fill="#4d6185"/>
<rect x="1065.500" y="717.500" width="16" height="16" fill="url(#cb)" stroke="#eef"/><path d="M1070 722v8M1072.500 722v8M1075 722v8M1077.500 722v8" stroke="#8fa8dc"/>
<rect x="1083.500" y="717.500" width="17" height="16" fill="url(#cb)" stroke="#eef"/><path d="M1089 721l4 4.500-4 4.500h2l4-4.500-4-4.500z" fill="#4d6185"/>
<path d="M7 735.500H1153" stroke="#fbfaf5" stroke-width="3"/><path d="M7 740.500H1153" stroke="#aca899" stroke-width="1"/>

<!-- command -->
<rect x="14.500" y="751.500" width="3" height="46" fill="#fbfaf5" stroke="#b9b6a3"/><rect x="19.500" y="751.500" width="3" height="46" fill="#fbfaf5" stroke="#b9b6a3"/>
<rect x="26" y="748" width="1102" height="55" fill="#fff"/>
<path d="M26 748.500H1146" stroke="#222" stroke-width="1.600"/><path d="M26.500 748V803" stroke="#555"/><path d="M26 783.500H1146" stroke="#aca899"/><path d="M26 802.500H1146" stroke="#d5d2c1"/>
<rect x="1126" y="749" width="20" height="34" fill="#fff"/>
<text x="28" y="761" class="m" textLength="153" lengthAdjust="spacingAndGlyphs">Command: *Cancel*</text>
<text x="28" y="776" class="m" textLength="153" lengthAdjust="spacingAndGlyphs">Command: *Cancel*</text>
<text x="28" y="798" class="m" textLength="70" lengthAdjust="spacingAndGlyphs">Command:</text>
<path d="M110 786v13" stroke="#000" stroke-width="1.500"/>
<rect x="1127.500" y="750.500" width="15" height="15" fill="url(#cb)" stroke="#eef"/><path d="M1131 760l4.500-4 4.500 4v2l-4.500-3-4.500 3z" fill="#4d6185"/>
<rect x="1127.500" y="767.500" width="15" height="15" fill="url(#cb)" stroke="#eef"/><path d="M1131 773l4.500 4 4.500-4v2l-4.500 3-4.500-3z" fill="#4d6185"/>
<rect x="1067" y="785" width="57" height="15" fill="url(#dith)"/>
<rect x="1051.500" y="785.500" width="16" height="15" fill="url(#cb)" stroke="#eef"/><path d="M1062 788l-4 4.500 4 4.500h-2l-4-4.500 4-4.500z" fill="#4d6185"/>
<rect x="1069.500" y="785.500" width="17" height="15" fill="url(#cb)" stroke="#eef"/><path d="M1074 789v8M1076.500 789v8M1079 789v8M1081.500 789v8" stroke="#8fa8dc"/>
<rect x="1106.500" y="785.500" width="16" height="15" fill="url(#cb)" stroke="#eef"/><path d="M1112 788l4 4.500-4 4.500h2l4-4.500-4-4.500z" fill="#4d6185"/>

<!-- status -->
<path d="M7 805.500H1153" stroke="#aca899"/><path d="M7 806.500H1153" stroke="#fbfaf5"/>
<g fill="#f2f0e4" stroke="#c9c6b4"><rect x="287.500" y="809.500" width="37" height="21"/><rect x="329.500" y="809.500" width="34" height="21"/><rect x="369.500" y="809.500" width="47" height="21"/><rect x="582.500" y="809.500" width="31" height="21"/></g>
<rect x="13.500" y="809.500" width="268" height="21" fill="#ece9d8" stroke="#aca899"/><path d="M13.500 830V809.500H281" fill="none" stroke="#716f64"/>
<g fill="#f4f2e8"><rect x="422" y="809" width="44" height="22"/><rect x="472" y="809" width="45" height="22"/><rect x="523" y="809" width="54" height="22"/><rect x="617" y="809" width="47" height="22"/></g>
<path d="M422.500 831V809.500H466M472.500 831V809.500H516.500M523.500 831V809.500H576.500M617.500 831V809.500H664" fill="none" stroke="#222"/>
<text x="15" y="825" textLength="130" lengthAdjust="spacingAndGlyphs">7.7414,  4.0789, 0.0000</text>
<text x="290" y="825" textLength="33" lengthAdjust="spacingAndGlyphs">SNAP</text>
<text x="332" y="825" textLength="29" lengthAdjust="spacingAndGlyphs">GRID</text>
<text x="371" y="825" textLength="43" lengthAdjust="spacingAndGlyphs">ORTHO</text>
<text x="426" y="825" textLength="38" lengthAdjust="spacingAndGlyphs">POLAR</text>
<text x="475" y="825" textLength="41" lengthAdjust="spacingAndGlyphs">OSNAP</text>
<text x="526" y="825" textLength="49" lengthAdjust="spacingAndGlyphs">OTRACK</text>
<text x="584" y="825" textLength="27" lengthAdjust="spacingAndGlyphs">LWT</text>
<text x="621" y="825" textLength="42" lengthAdjust="spacingAndGlyphs">MODEL</text>
<rect x="1090" y="809" width="26" height="22" fill="#f6f4ea"/><path d="M1094 811c5-2 8 2 6 8l3 7" fill="none" stroke="#5a7ca8" stroke-width="2"/><path d="M1104 815l7 14h-14z" fill="#f0d020" stroke="#333" stroke-width=".6"/><path d="M1104 820v5M1104 826v2" stroke="#000" stroke-width="1.500"/>
<path d="M1122 822h9l-4.500 5z" fill="#111"/>
<path d="M1151 822v8M1148 826v4M1145 830h7" stroke="#c5c2b0" stroke-width="1.500" stroke-dasharray="1.500 1.500"/>

<!-- taskbar -->
<rect y="835" width="1159" height="34" fill="url(#task)"/>
<path d="M0 835H103C112 835 117 844 117 852S112 869 103 869H0z" fill="url(#st)"/>
<rect x="12" y="842" width="8" height="8" fill="#e0502c"/><rect x="21" y="841" width="8" height="8" fill="#7fc63c"/><rect x="11" y="851" width="8" height="8" fill="#3a7ae8"/><rect x="20" y="850" width="8" height="8" fill="#f4c528"/>
<text x="39" y="859" class="w" style="font-size:19px;font-weight:bold;font-style:italic" textLength="49" lengthAdjust="spacingAndGlyphs">Inicio</text>
<g fill="#3c81f3" stroke="#2a62c8"><rect x="128.500" y="839.500" width="162" height="26" rx="2"/><rect x="293.500" y="839.500" width="164" height="26" rx="2"/><rect x="460.500" y="839.500" width="163" height="26" rx="2"/><rect x="793.500" y="839.500" width="164" height="26" rx="2"/></g>
<rect x="625.500" y="839.500" width="165" height="26" rx="2" fill="#1e52b7" stroke="#143c90"/>
<circle cx="146" cy="852" r="8" fill="#f0a030"/><path d="M146 844a8 8 0 0 1 8 8h-8z" fill="#d04020"/><path d="M138 852a8 8 0 0 0 8 8v-8z" fill="#3aa040"/><circle cx="146" cy="852" r="4.500" fill="#fff"/><path d="M144 849v6l4-3z" fill="#1f3f90"/>
<use href="#ie" x="311" y="852"/><use href="#ie" x="477" y="852"/>
<rect x="638.500" y="844.500" width="17" height="17" fill="#9cc6e8" stroke="#fff"/><text x="647" y="858" text-anchor="middle" class="w" style="font-size:16px;font-weight:bold">a</text>
<rect x="804" y="843" width="14" height="17" fill="#eef" stroke="#666"/><rect x="803" y="843" width="10" height="10" fill="#2a55a8"/><text x="804" y="852" class="w" style="font-size:9px;font-weight:bold">W</text>
<text x="160" y="857" class="w" textLength="116" lengthAdjust="spacingAndGlyphs">Reproductor de Wi...</text>
<text x="325" y="857" class="w" textLength="113" lengthAdjust="spacingAndGlyphs">Foros 3DPoder - R...</text>
<text x="491" y="857" class="w" textLength="118" lengthAdjust="spacingAndGlyphs">El poder la perspec...</text>
<text x="660" y="857" class="w" textLength="108" lengthAdjust="spacingAndGlyphs">AutoCAD 2004 - [...</text>
<text x="825" y="857" class="w" textLength="114" lengthAdjust="spacingAndGlyphs">Documento1 - Micr...</text>
<rect x="968" y="843" width="18" height="18" fill="#3b78d8"/><text x="970" y="857" class="w" textLength="14" lengthAdjust="spacingAndGlyphs">ES</text>
<rect x="1006" y="835" width="153" height="34" fill="url(#tray)"/>
<circle cx="1005" cy="853" r="9.500" fill="#2a8af0" stroke="#cfe8ff"/><path d="M1007 848l-4 5 4 5" fill="none" stroke="#fff" stroke-width="2.200"/>
<circle cx="1027" cy="853" r="8" fill="#e8e4d8" stroke="#777" stroke-width="1.500"/><path d="M1023 858l8-10" stroke="#111" stroke-width="2.500"/>
<rect x="1041" y="846" width="6" height="6" fill="#d84a20"/><rect x="1048" y="848" width="6" height="6" fill="#5ab030"/><rect x="1041" y="853" width="6" height="6" fill="#2f6fd0"/><rect x="1048" y="855" width="6" height="6" fill="#e8c020"/>
<rect x="1059" y="852" width="10" height="8" fill="#bcd0e8" stroke="#345"/><rect x="1066" y="845" width="10" height="8" fill="#dce8f4" stroke="#345"/>
<text x="1084" y="857" class="w" textLength="60" lengthAdjust="spacingAndGlyphs">08:09 p.m.</text>
</svg>
</body></html>
